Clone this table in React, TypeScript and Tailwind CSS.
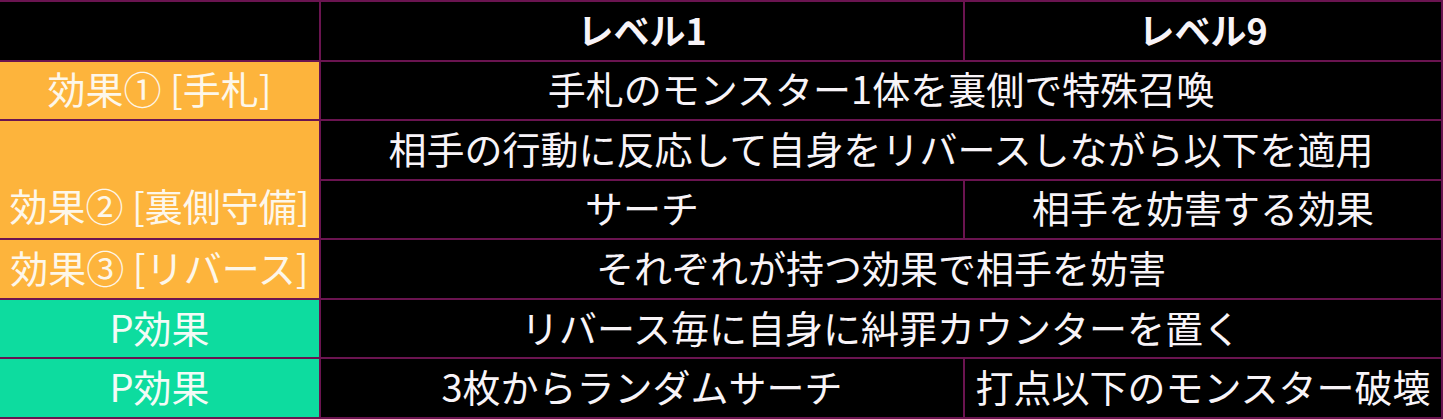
import React from "react";

const cell = "flex items-center justify-center bg-black text-[#f8f4f8] whitespace-nowrap pb-[4px]";
const orange = "flex items-center justify-center bg-[#fdb43c] text-[#fdf7ea] whitespace-nowrap pb-[4px]";
const teal = "flex items-center justify-center bg-[#0ddc9f] text-[#f3fbf6] whitespace-nowrap pb-[4px]";

const App = () => {
  return (
    <div className="w-[1443px] h-[419px] bg-black">
      <div
        className="grid h-[419px] grid-cols-[319px_642px_476px] grid-rows-7 gap-[2px] bg-[#6a1450] pt-[2px] pr-[2px] pb-[2px] text-[38px] leading-none"
        style={{ fontFamily: '"Noto Sans CJK JP", "Noto Sans", sans-serif' }}
      >
        <div className={cell}></div>
        <div className={`${cell} font-bold text-[36px]`}>レベル1</div>
        <div className={`${cell} font-bold text-[36px]`}>レベル9</div>

        <div className={orange}>効果① [手札]</div>
        <div className={`${cell} col-span-2`}>手札のモンスター1体を裏側で特殊召喚</div>

        <div className={`${orange} row-span-2 !items-end !pb-[14px]`}>効果② [裏側守備]</div>
        <div className={`${cell} col-span-2`}>相手の行動に反応して自身をリバースしながら以下を適用</div>
        <div className={cell}>サーチ</div>
        <div className={cell}>相手を妨害する効果</div>

        <div className={orange}>効果③ [リバース]</div>
        <div className={`${cell} col-span-2`}>それぞれが持つ効果で相手を妨害</div>

        <div className={teal}>P効果</div>
        <div className={`${cell} col-span-2`}>リバース毎に自身に糾罪カウンターを置く</div>

        <div className={teal}>P効果</div>
        <div className={cell}>3枚からランダムサーチ</div>
        <div className={cell}>打点以下のモンスター破壊</div>
      </div>
    </div>
  );
};

export default App;
